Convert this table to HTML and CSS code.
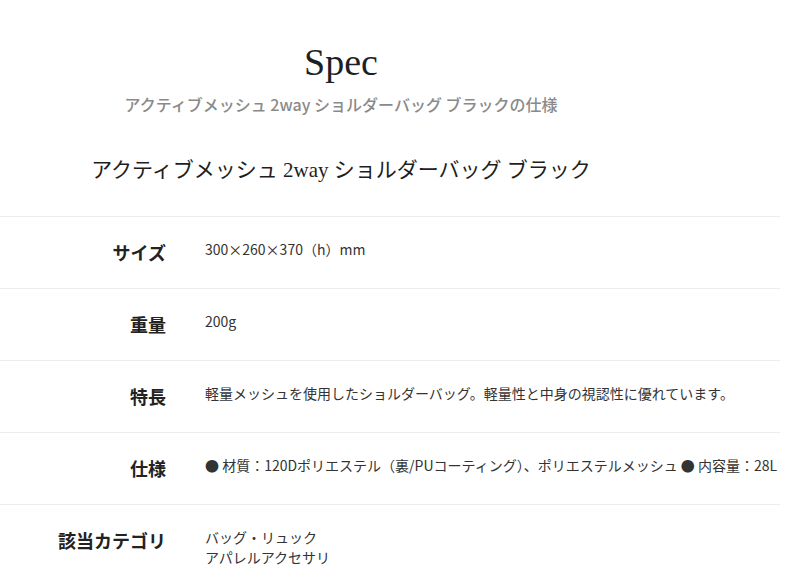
FILE: index.html
```html
<!DOCTYPE html>
<html lang="ja">
<head>
<meta charset="utf-8">
<title>Spec</title>
<link rel="stylesheet" href="styles.css">
</head>
<body>
<section class="spec">
  <header class="intro">
    <h1 class="title">Spec</h1>
    <p class="subtitle">アクティブメッシュ 2way ショルダーバッグ ブラックの仕様</p>
  </header>
  <h2 class="product">アクティブメッシュ 2way ショルダーバッグ ブラック</h2>
  <dl class="table">
    <div class="row">
      <dt class="label">サイズ</dt>
      <dd class="value">300×260×370（h）mm</dd>
    </div>
    <div class="row">
      <dt class="label">重量</dt>
      <dd class="value">200g</dd>
    </div>
    <div class="row">
      <dt class="label">特長</dt>
      <dd class="value">軽量メッシュを使用したショルダーバッグ。軽量性と中身の視認性に優れています。</dd>
    </div>
    <div class="row">
      <dt class="label">仕様</dt>
      <dd class="value">● 材質：120Dポリエステル（裏/PUコーティング）、ポリエステルメッシュ ● 内容量：28L</dd>
    </div>
    <div class="row">
      <dt class="label">該当カテゴリ</dt>
      <dd class="value">バッグ・リュック<br>アパレルアクセサリ</dd>
    </div>
  </dl>
</section>
</body>
</html>
```

FILE: styles.css
```css
html, body {
  margin: 0;
  padding: 0;
  background: #fff;
}

body {
  font-family: "Noto Sans CJK JP", "Noto Sans", sans-serif;
  color: #222;
}

.spec {
  padding-top: 38px;
}

.intro {
  width: 682px;
  text-align: center;
}

.title {
  margin: 0;
  font-family: "Liberation Serif", "Noto Sans CJK JP", serif;
  font-weight: 400;
  font-size: 38px;
  line-height: 48px;
  color: #1c1f26;
}

.subtitle {
  margin: 6px 0 0;
  font-size: 16px;
  line-height: 24px;
  font-weight: 500;
  color: #8a8a8a;
}

.product {
  width: 682px;
  margin: 39px 0 0;
  text-align: center;
  font-family: "Liberation Serif", "Noto Sans CJK JP", serif;
  font-size: 21px;
  font-weight: 400;
  line-height: 30px;
  color: #1e1e1e;
}

.table {
  width: 780px;
  margin: 31px 0 0;
}

.row {
  display: flex;
  align-items: flex-start;
  border-top: 1px solid #ececec;
  padding: 22px 0 22px;
  min-height: 27px;
}

.label {
  width: 166px;
  margin: 0;
  text-align: right;
  font-size: 18px;
  line-height: 27px;
  font-weight: 700;
  color: #222;
  flex: none;
}

.value {
  margin: 0 0 0 39px;
  font-size: 14px;
  line-height: 20px;
  color: #333;
  white-space: nowrap;
}
```
